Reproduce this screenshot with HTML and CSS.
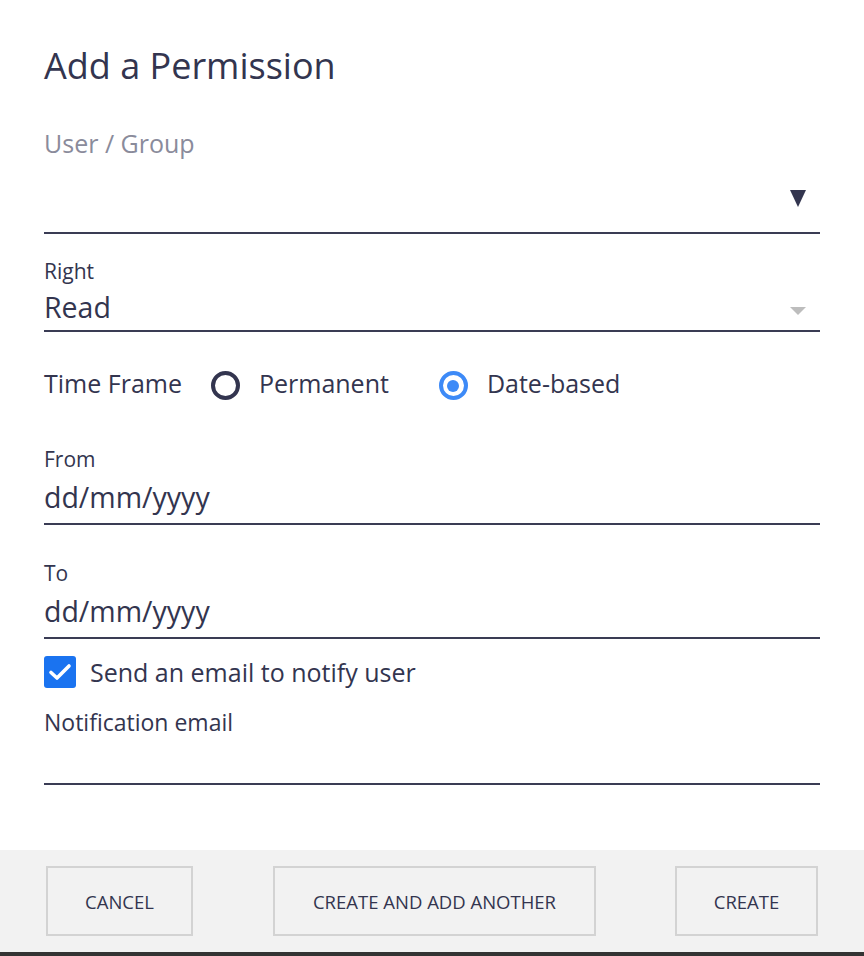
FILE: index.html
```html
<!DOCTYPE html>
<html>
<head>
<meta charset="utf-8">
<link rel="stylesheet" href="styles.css">
</head>
<body>
<div class="dialog">
  <div class="content">
    <h1 class="title">Add a Permission</h1>
    <div class="field field-user">
      <div class="float-label">User / Group</div>
      <div class="select-box user-box">
        <span class="caret-dark"></span>
      </div>
    </div>
    <div class="field field-right">
      <div class="label">Right</div>
      <div class="select-box value-box">
        <span class="value">Read</span>
        <span class="caret-light"></span>
      </div>
    </div>
    <div class="timeframe">
      <span class="tf-label">Time Frame</span>
      <label class="radio"><span class="radio-ring"></span><span class="radio-text">Permanent</span></label>
      <label class="radio"><span class="radio-ring checked"></span><span class="radio-text">Date-based</span></label>
    </div>
    <div class="field field-from">
      <div class="label">From</div>
      <div class="select-box value-box date-box"><span class="value">dd/mm/yyyy</span></div>
    </div>
    <div class="field field-to">
      <div class="label">To</div>
      <div class="select-box value-box date-box"><span class="value">dd/mm/yyyy</span></div>
    </div>
    <label class="checkbox-row">
      <span class="checkbox">
        <svg width="24" height="20" viewBox="0 0 24 20"><path d="M3 10.5 L9 16 L21 4" fill="none" stroke="#fff" stroke-width="3.6" stroke-linecap="round" stroke-linejoin="round"/></svg>
      </span>
      <span class="checkbox-text">Send an email to notify user</span>
    </label>
    <div class="field field-email">
      <div class="label email-label">Notification email</div>
      <div class="select-box email-box"></div>
    </div>
  </div>
  <div class="footer">
    <button class="btn btn-cancel">CANCEL</button>
    <button class="btn btn-another">CREATE AND ADD ANOTHER</button>
    <button class="btn btn-create">CREATE</button>
  </div>
</div>
</body>
</html>
```
FILE: styles.css
```css
html, body {
  margin: 0;
  padding: 0;
  background: #ffffff;
}
body {
  font-family: "Open Sans", "Noto Sans", sans-serif;
  color: #33354f;
}
.dialog {
  width: 864px;
  height: 956px;
  display: flex;
  flex-direction: column;
  box-sizing: border-box;
}
.content {
  flex: 1;
  padding: 0 44px;
}
.title {
  margin: 0;
  padding-top: 44px;
  font-size: 36px;
  font-weight: 400;
  line-height: 44px;
  color: #33354f;
}
.field-user {
  margin-top: 38px;
}
.float-label {
  font-size: 25px;
  line-height: 34px;
  color: #8a8b9b;
}
.select-box {
  position: relative;
  border-bottom: 2px solid #3a3c54;
}
.user-box {
  height: 72px;
}
.caret-dark {
  position: absolute;
  right: 14px;
  top: 30px;
  width: 0;
  height: 0;
  border-left: 8px solid transparent;
  border-right: 8px solid transparent;
  border-top: 17px solid #33354f;
}
.caret-light {
  position: absolute;
  right: 14px;
  top: 18px;
  width: 0;
  height: 0;
  border-left: 8px solid transparent;
  border-right: 8px solid transparent;
  border-top: 8px solid #bdbdbd;
}
.field-right {
  margin-top: 23px;
}
.label {
  font-size: 21px;
  line-height: 28px;
  color: #33354f;
}
.value-box {
  margin-top: 4px;
  padding-bottom: 5px;
}
.value {
  display: block;
  font-size: 28.5px;
  line-height: 36px;
  height: 36px;
}
.date-box {
  margin-top: 6px;
  padding-bottom: 8px;
}
.timeframe {
  display: flex;
  align-items: center;
  margin-top: 31px;
  height: 40px;
}
.tf-label {
  font-size: 25px;
  margin-right: 29px;
}
.radio {
  display: flex;
  align-items: center;
}
.radio + .radio {
  margin-left: 50px;
}
.radio-ring {
  width: 29px;
  height: 29px;
  box-sizing: border-box;
  border: 4px solid #33354f;
  border-radius: 50%;
  margin-right: 19px;
  margin-top: 5px;
  position: relative;
}
.radio-ring.checked {
  border-color: #3d8af7;
}
.radio-ring.checked::after {
  content: "";
  position: absolute;
  left: 4.5px;
  top: 4.5px;
  width: 12px;
  height: 12px;
  border-radius: 50%;
  background: #3d8af7;
}
.radio-text {
  font-size: 25px;
}
.field-from {
  margin-top: 42px;
}
.field-to {
  margin-top: 34px;
}
.checkbox-row {
  display: flex;
  align-items: center;
  margin-top: 17px;
  height: 32px;
}
.checkbox {
  width: 32px;
  height: 32px;
  border-radius: 3px;
  background: #1a73f0;
  display: flex;
  align-items: center;
  justify-content: center;
  margin-right: 14px;
}
.checkbox-text {
  font-size: 25px;
}
.field-email {
  margin-top: 19px;
}
.email-label {
  font-size: 23px;
  line-height: 30px;
}
.email-box {
  height: 46px;
}
.footer {
  height: 102px;
  background: #f2f2f2;
  border-bottom: 4px solid #333333;
  display: flex;
  align-items: center;
  padding: 0 46px;
}
.btn {
  font-family: "Open Sans", "Noto Sans", sans-serif;
  font-size: 18.5px;
  color: #33354f;
  background: #f2f2f2;
  border: 2px solid #d3d3d3;
  height: 70px;
  padding: 0;
}
.btn-cancel {
  width: 147px;
}
.btn-another {
  width: 323px;
  margin-left: 80px;
}
.btn-create {
  width: 143px;
  margin-left: 79px;
}
```
